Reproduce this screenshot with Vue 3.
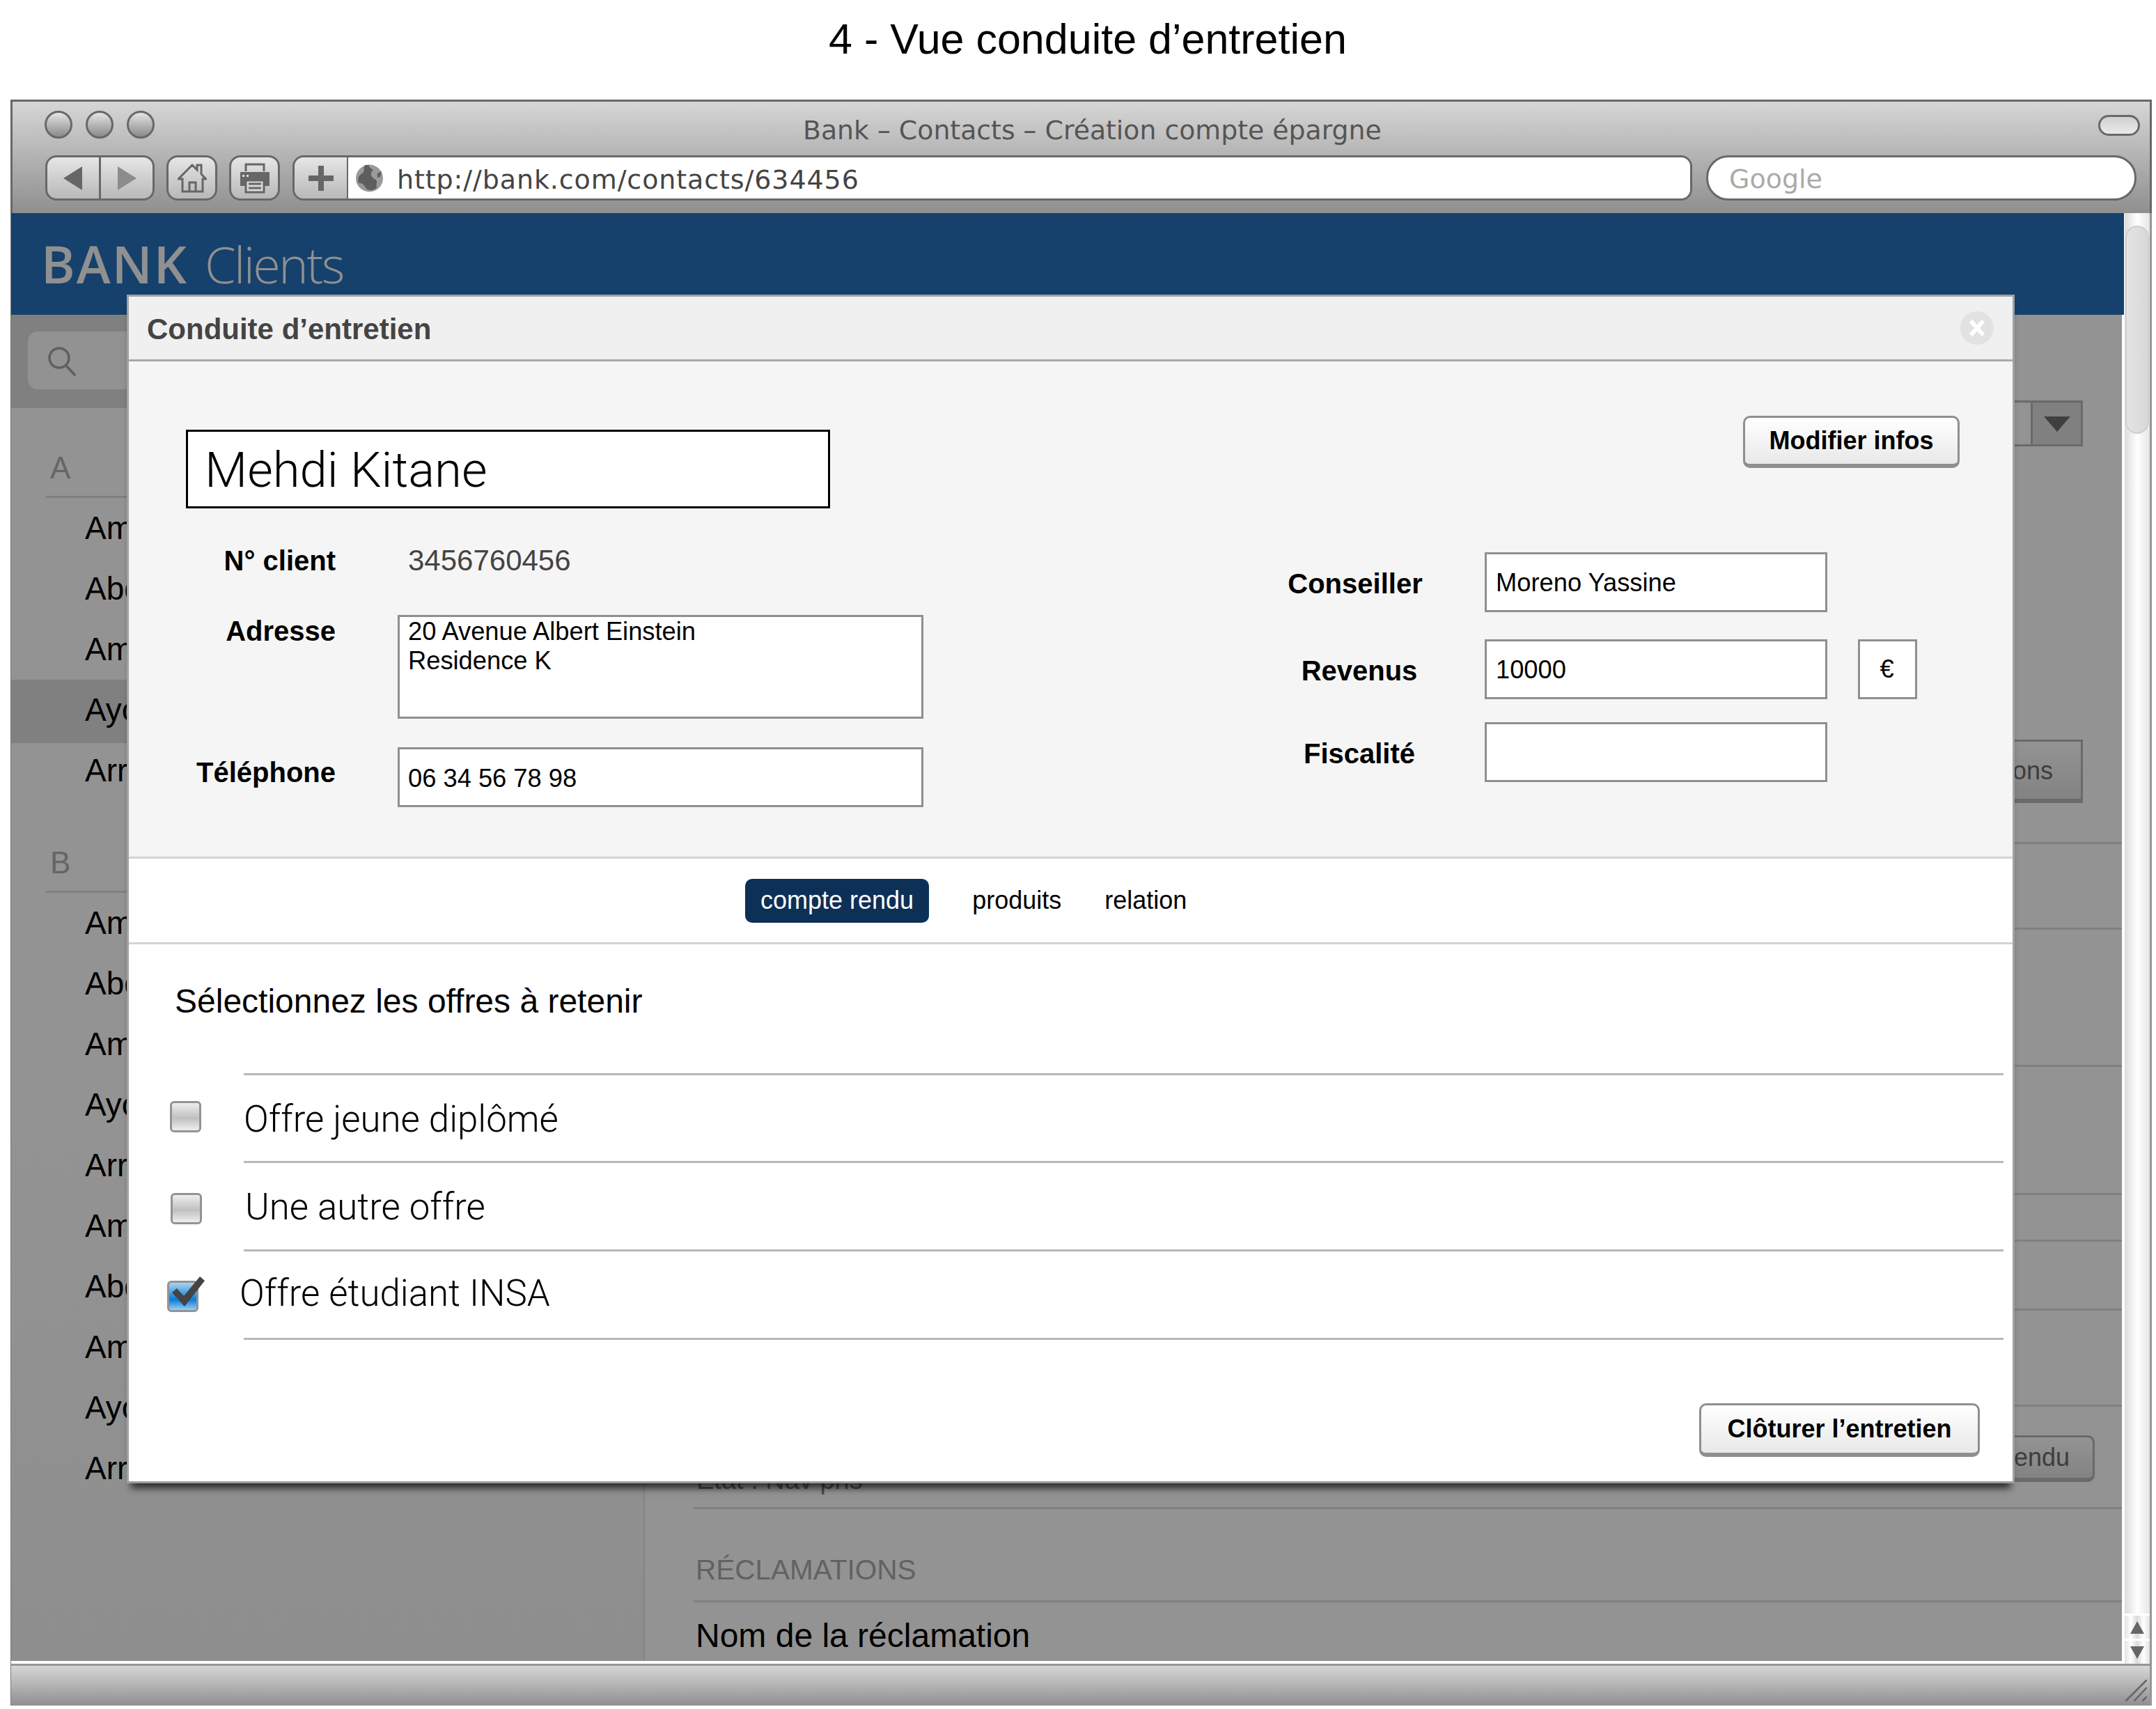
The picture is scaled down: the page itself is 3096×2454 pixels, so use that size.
<template>
  <div class="page">
    <h1 class="doc-title">4 - Vue conduite d’entretien</h1>

    <div class="window">
      <div class="chrome">
        <div class="titlebar">
          <div class="lights">
            <span class="light"></span>
            <span class="light"></span>
            <span class="light"></span>
          </div>
          <div class="window-title">Bank – Contacts – Création compte épargne</div>
          <span class="pill"></span>
        </div>
        <div class="toolbar">
          <div class="btn-group nav-group">
            <span class="tool-btn cell-w">
              <svg width="30" height="36" viewBox="0 0 30 36"><path d="M28 1V35L1 18Z" fill="#666"/></svg>
            </span>
            <span class="tool-btn cell-w sep">
              <svg width="30" height="36" viewBox="0 0 30 36"><path d="M2 1V35L29 18Z" fill="#8c8c8c"/></svg>
            </span>
          </div>
          <div class="btn-group single">
            <span class="tool-btn">
              <svg width="42" height="42" viewBox="0 0 42 42" fill="none" stroke="#666" stroke-width="3" stroke-linejoin="miter">
                <path d="M1 22L21 2L28 9V2H34V15L41 22H36V40H7V22Z"/>
                <path d="M17 40V27H26V40"/>
              </svg>
            </span>
          </div>
          <div class="btn-group single">
            <span class="tool-btn">
              <svg width="44" height="44" viewBox="0 0 44 44">
                <path d="M9 12V2H35V12" fill="none" stroke="#666" stroke-width="3"/>
                <rect x="1" y="13" width="42" height="20" fill="#666"/>
                <rect x="4" y="17" width="3" height="3" fill="#ddd"/>
                <rect x="10" y="17" width="3" height="3" fill="#ddd"/>
                <rect x="9" y="25" width="26" height="17" fill="#d8d8d8" stroke="#666" stroke-width="3"/>
                <path d="M13 30H31M13 36H31" stroke="#666" stroke-width="3"/>
              </svg>
            </span>
          </div>
          <div class="address">
            <span class="add-btn">
              <svg width="36" height="36" viewBox="0 0 36 36"><path d="M14 0H22V14H36V22H22V36H14V22H0V14H14Z" fill="#666"/></svg>
            </span>
            <span class="url-field">
              <svg class="globe" width="39" height="40" viewBox="0 0 39 40">
                <circle cx="19.500" cy="20" r="19.500" fill="#9a9a9a"/>
                <path d="M13 1C10 6 14 10 9 13C4 16 2 20 4 27C8 26 12 29 15 35C21 39 27 37 30 33C28 27 33 25 27 21C21 18 20 12 25 8C21 6 18 3 19 1Z" fill="#5e5e5e"/>
                <path d="M31 13L37 10L35 18L31 19Z" fill="#5e5e5e"/>
              </svg>
              <span class="url-text">http://bank.com/contacts/634456</span>
            </span>
          </div>
          <div class="search-field">Google</div>
        </div>
      </div>

      <div class="content">
        <div class="viewport">
          <header class="app-header">
            <span class="brand">BANK</span>
            <span class="brand-sub">Clients</span>
          </header>

          <div class="app-body">
            <aside class="sidebar">
              <div class="sidebar-search">
                <div class="search-box">
                  <svg width="42" height="42" viewBox="0 0 42 42" fill="none" stroke="#5f5f5f" stroke-width="3.500" stroke-linecap="round">
                    <circle cx="17" cy="16" r="14"/>
                    <path d="M27 27L39 40"/>
                  </svg>
                </div>
              </div>
              <div v-for="group in groups" :key="group.letter" class="group">
                <div class="group-letter">{{ group.letter }}</div>
                <div
                  v-for="(name, index) in group.names"
                  :key="group.letter + index"
                  class="client"
                  :class="{ selected: group.letter === 'A' && index === 3 }"
                >{{ name }}</div>
              </div>
            </aside>

            <main class="detail">
              <div class="detail-top">
                <div class="dropdown">
                  <span class="dropdown-arrow"></span>
                </div>
                <div class="ghost-btn">Informations</div>
              </div>
              <div
                v-for="(height, index) in ruleGaps"
                :key="index"
                class="detail-rule"
                :style="{ height: height + 'px' }"
              ></div>
              <div class="detail-state">
                <span class="state-text">Etat : Nav pris</span>
                <span class="ghost-btn rounded">Compte rendu</span>
              </div>
              <div class="detail-heading">RÉCLAMATIONS</div>
              <div class="detail-name">Nom de la réclamation</div>
            </main>
          </div>

          <section class="modal">
            <div class="modal-header">
              <span class="modal-title">Conduite d’entretien</span>
              <span class="modal-close">
                <svg width="24" height="26" viewBox="0 0 24 26"><path d="M3 3L21 23M21 3L3 23" stroke="#fff" stroke-width="6"/></svg>
              </span>
            </div>

            <div class="summary">
              <div class="summary-left">
                <div class="name-box">Mehdi Kitane</div>
                <div class="field-row client-row">
                  <span class="label">N° client</span>
                  <span class="client-no">3456760456</span>
                </div>
                <div class="field-row address-row">
                  <span class="label">Adresse</span>
                  <div class="input area">20 Avenue Albert Einstein<br>Residence K</div>
                </div>
                <div class="field-row phone-row">
                  <span class="label">Téléphone</span>
                  <div class="input phone">06 34 56 78 98</div>
                </div>
              </div>

              <div class="summary-right">
                <button class="action-btn edit-btn">Modifier infos</button>
                <div class="side-row first">
                  <span class="label side-label conseiller">Conseiller</span>
                  <div class="input side-input">Moreno Yassine</div>
                </div>
                <div class="side-row second">
                  <span class="label side-label">Revenus</span>
                  <div class="input side-input">10000</div>
                  <div class="input currency">€</div>
                </div>
                <div class="side-row third">
                  <span class="label side-label">Fiscalité</span>
                  <div class="input side-input"></div>
                </div>
              </div>
            </div>

            <nav class="tabs">
              <span class="tab active">compte rendu</span>
              <span class="tab">produits</span>
              <span class="tab">relation</span>
            </nav>

            <div class="offers">
              <h2 class="offers-title">Sélectionnez les offres à retenir</h2>
              <div class="offer-list">
                <div v-for="offer in offers" :key="offer.label" class="offer">
                  <div class="offer-check">
                    <span
                      class="checkbox"
                      :class="{ checked: offer.checked }"
                      :style="{ marginLeft: offer.boxX + 'px', marginTop: offer.boxY + 'px' }"
                    >
                      <svg v-if="offer.checked" class="tick" width="50" height="44" viewBox="0 0 50 44">
                        <path d="M2 23L9 17L19 28L42 0L49 6L20 43Z" fill="#444"/>
                      </svg>
                    </span>
                  </div>
                  <div class="offer-body">
                    <span class="offer-label" :style="{ marginLeft: offer.textX + 'px', marginTop: offer.textY + 'px' }">{{ offer.label }}</span>
                  </div>
                </div>
              </div>
              <div class="modal-actions">
                <button class="action-btn close-btn">Clôturer l’entretien</button>
              </div>
            </div>
          </section>
        </div>

        <div class="scrollbar">
          <div class="scroll-track">
            <span class="scroll-thumb"></span>
          </div>
          <span class="scroll-arrow"><i class="tri up"></i></span>
          <span class="scroll-arrow"><i class="tri down"></i></span>
        </div>
      </div>

      <footer class="statusbar">
        <svg width="32" height="32" viewBox="0 0 32 32" stroke="#666" stroke-width="2.500" stroke-linecap="round">
          <path d="M2 31L31 2M14 31L31 13M26 31L31 26"/>
        </svg>
      </footer>
    </div>
  </div>
</template>

<script setup>
const groups = [
  { letter: 'A', names: ['Amine', 'Abdel', 'Amel', 'Ayoub', 'Arriel'] },
  { letter: 'B', names: ['Amine', 'Abdel', 'Amel', 'Ayoub', 'Arriel', 'Amine', 'Abdel', 'Amel', 'Ayoub', 'Arriel'] },
]

// hauteurs entre les filets du panneau de droite
const ruleGaps = [123, 197, 184, 67, 99, 138]

const offers = [
  { label: 'Offre jeune diplômé', boxX: 59, boxY: -4, textX: 0, textY: 2, checked: false },
  { label: 'Une autre offre', boxX: 60, boxY: 3, textX: 2, textY: 2, checked: false },
  { label: 'Offre étudiant INSA', boxX: 55, boxY: 2, textX: -6, textY: -4, checked: true },
]
</script>

<style>
html, body {
  margin: 0;
  background: #fff;
}
</style>

<style scoped>
.page {
  width: 3096px;
  height: 2454px;
  overflow: hidden;
  font-family: "Liberation Sans", Arial, sans-serif;
  color: #000;
}

.doc-title {
  margin: 0;
  height: 143px;
  padding: 20px 0 0 28px;
  box-sizing: border-box;
  text-align: center;
  font-size: 61px;
  font-weight: 400;
  line-height: 72px;
}

.window {
  width: 3075px;
  margin-left: 15px;
  display: flex;
  flex-direction: column;
}

/* navigateur */
.chrome {
  height: 163px;
  box-sizing: border-box;
  border: 3px solid #686868;
  border-bottom: 0;
  background: linear-gradient(#d6d6d6, #8f8f8f);
}

.titlebar {
  height: 77px;
  display: flex;
  align-items: flex-start;
  position: relative;
}

.lights {
  display: flex;
  gap: 19px;
  padding: 13px 0 0 46px;
}

.light {
  width: 40px;
  height: 40px;
  box-sizing: border-box;
  border-radius: 50%;
  border: 3px solid #686868;
  background: linear-gradient(#e4e4e4, #8a8a8a);
}

.window-title {
  position: absolute;
  left: 1135px;
  top: 17px;
  width: 830px;
  font-family: "DejaVu Sans", sans-serif;
  font-size: 37.800px;
  line-height: 48px;
  white-space: nowrap;
  color: #555;
}

.pill {
  margin: 19px 14px 0 auto;
  width: 60px;
  height: 30px;
  box-sizing: border-box;
  border-radius: 15px;
  border: 3px solid #686868;
  background: linear-gradient(#d0d0d0, #eaeaea);
}

.toolbar {
  display: flex;
  gap: 17px;
  padding-left: 47px;
  height: 65px;
}

.btn-group {
  display: flex;
  height: 65px;
  box-sizing: border-box;
  border: 3px solid #686868;
  border-radius: 16px;
  background: linear-gradient(#e6e6e6, #b8b8b8);
  overflow: hidden;
}

.nav-group {
  width: 157px;
}

.single {
  width: 73px;
}

.tool-btn {
  flex: 1;
  display: flex;
  align-items: center;
  justify-content: center;
}

.sep {
  border-left: 3px solid #686868;
}

.address {
  display: flex;
  width: 2010px;
  height: 65px;
  box-sizing: border-box;
  border: 3px solid #686868;
  border-radius: 16px;
  overflow: hidden;
  margin-left: 1px;
}

.add-btn {
  width: 75px;
  flex: none;
  display: flex;
  align-items: center;
  justify-content: center;
  border-right: 2px solid #686868;
  background: linear-gradient(#e6e6e6, #b8b8b8);
}

.url-field {
  flex: 1;
  display: flex;
  align-items: center;
  background: #fff;
  padding-left: 11px;
}

.globe {
  flex: none;
}

.url-text {
  margin: 4px 0 0 20px;
  font-family: "DejaVu Sans", sans-serif;
  font-size: 38px;
  letter-spacing: 0.900px;
  color: #444;
  white-space: nowrap;
}

.search-field {
  margin-left: 3px;
  width: 618px;
  height: 65px;
  box-sizing: border-box;
  border: 3px solid #686868;
  border-radius: 32px;
  background: #fff;
  padding-left: 30px;
  font-family: "DejaVu Sans", sans-serif;
  font-size: 38px;
  line-height: 62px;
  color: #aaa;
}

.content {
  display: flex;
  height: 2083px;
  background: #fff;
  border-left: 1px solid #777;
  border-right: 3px solid #969696;
}

.viewport {
  position: relative;
  width: 3031px;
  height: 2079px;
  display: flex;
  flex-direction: column;
  background: #939393;
  flex: none;
}

/* application en arrière-plan */
.app-header {
  height: 146px;
  margin-right: -3px;
  padding-left: 43px;
  box-sizing: border-box;
  background: #15416c;
  color: #909090;
  font-family: "Open Sans", sans-serif;
  font-size: 72px;
  line-height: 78px;
  padding-top: 34px;
  white-space: nowrap;
  flex: none;
}

.brand {
  font-size: 74px;
  font-weight: 600;
  letter-spacing: 2px;
  margin-right: 24px;
}

.brand-sub {
  font-weight: 300;
  letter-spacing: -2.600px;
}

.app-body {
  flex: 1;
  display: flex;
  min-height: 0;
}

.sidebar {
  width: 908px;
  flex: none;
  border-right: 2px solid #838383;
  background: linear-gradient(#939393 60%, #8e8e8e);
}

.sidebar-search {
  height: 134px;
  padding: 24px 0 0 24px;
  box-sizing: border-box;
  background: #808080;
}

.search-box {
  width: 600px;
  height: 83px;
  box-sizing: border-box;
  padding: 22px 0 0 28px;
  border-radius: 14px;
  background: #929292;
}

.group {
  padding-top: 58px;
}

.group + .group {
  padding-top: 61px;
}

.group-letter {
  margin-left: 50px;
  height: 68px;
  border-bottom: 3px solid #808080;
  font-size: 44px;
  line-height: 56px;
  padding-left: 6px;
  color: #666;
}

.client {
  height: 87px;
  padding-left: 106px;
  box-sizing: border-box;
  font-size: 46px;
  line-height: 87px;
}

.client.selected {
  background: #808080;
  box-shadow: 0 4px 0 #808080;
}

.detail {
  flex: 1;
  padding-left: 70px;
  min-width: 0;
}

.detail-top {
  height: 760px;
  box-sizing: border-box;
  display: flex;
  flex-direction: column;
  align-items: flex-end;
  padding: 123px 56px 0 0;
  border-bottom: 3px solid #808080;
}

.dropdown {
  width: 500px;
  height: 66px;
  box-sizing: border-box;
  border: 3px solid #6a6a6a;
  display: flex;
  justify-content: flex-end;
}

.dropdown-arrow {
  width: 69px;
  background: #808080;
  border-left: 3px solid #6a6a6a;
  position: relative;
}

.dropdown-arrow::after {
  content: "";
  position: absolute;
  left: 16px;
  top: 20px;
  border-left: 19px solid transparent;
  border-right: 19px solid transparent;
  border-top: 22px solid #3f3f3f;
}

.ghost-btn {
  height: 91px;
  box-sizing: border-box;
  margin-top: 421px;
  padding: 0 40px;
  border: 3px solid #6a6a6a;
  border-bottom-width: 6px;
  background: linear-gradient(#939393, #838383);
  color: #3d3d3d;
  font-size: 36px;
  line-height: 84px;
  white-space: nowrap;
}

.detail-rule {
  box-sizing: border-box;
  border-bottom: 3px solid #808080;
}

.detail-state {
  height: 147px;
  box-sizing: border-box;
  border-bottom: 3px solid #808080;
  display: flex;
  justify-content: space-between;
  align-items: flex-start;
  padding: 0 39px 0 4px;
}

.state-text {
  margin-top: 83px;
  font-size: 38px;
  line-height: 44px;
  color: #4c4c4c;
  white-space: nowrap;
}

.ghost-btn.rounded {
  margin-top: 41px;
  height: 67px;
  line-height: 58px;
  border-radius: 10px;
  padding: 0 33px 0 60px;
}

.detail-heading {
  height: 134px;
  box-sizing: border-box;
  padding: 62px 0 0 3px;
  border-bottom: 3px solid #808080;
  font-size: 40.500px;
  line-height: 50px;
  color: #626262;
}

.detail-name {
  padding: 20px 0 0 3px;
  font-size: 48px;
  line-height: 56px;
  white-space: nowrap;
}

/* fenêtre modale */
.modal {
  position: absolute;
  left: 166px;
  top: 117px;
  width: 2711px;
  height: 1707px;
  box-sizing: border-box;
  border: 3px solid #a2a2a2;
  border-bottom-color: #9c9c9c;
  background: #fff;
  display: flex;
  flex-direction: column;
  box-shadow: 0 13px 10px -6px rgba(0, 0, 0, 0.7);
}

.modal-header {
  height: 93px;
  flex: none;
  box-sizing: border-box;
  border-bottom: 3px solid #a8a8a8;
  background: #f0f0f0;
  display: flex;
  align-items: center;
  justify-content: space-between;
  padding: 0 27px 0 26px;
}

.modal-title {
  margin-top: 3px;
  font-size: 42px;
  font-weight: 700;
  color: #444;
}

.modal-close {
  width: 48px;
  height: 48px;
  border-radius: 50%;
  background: #e2e2e2;
  display: flex;
  align-items: center;
  justify-content: center;
}

.summary {
  height: 711px;
  flex: none;
  box-sizing: border-box;
  background: #f5f5f5;
  padding: 98px 76px 0 82px;
  display: flex;
  justify-content: space-between;
}

.summary-left {
  width: 1059px;
}

.name-box {
  width: 925px;
  height: 113px;
  box-sizing: border-box;
  border: 3px solid #000;
  background: #fff;
  padding-left: 24px;
  font-family: Roboto, "Liberation Sans", sans-serif;
  font-weight: 300;
  font-size: 70.700px;
  line-height: 110px;
}

.field-row {
  display: grid;
  grid-template-columns: 215px 755px;
  column-gap: 89px;
}

.label {
  font-size: 40px;
  font-weight: 700;
  text-align: right;
  white-space: nowrap;
  line-height: 50px;
}

.client-row {
  margin-top: 50px;
}

.client-no {
  padding-left: 15px;
  font-size: 42px;
  line-height: 50px;
  color: #444;
}

.address-row {
  margin-top: 53px;
}

.address-row .label {
  margin-top: -2px;
}

.phone-row {
  margin-top: 41px;
}

.phone-row .label {
  padding-top: 11px;
}

.input {
  box-sizing: border-box;
  border: 3px solid #8f8f8f;
  background: #fff;
  font-size: 36.300px;
  padding-left: 12px;
}

.area {
  height: 149px;
  line-height: 42px;
  padding-top: 0;
}

.phone {
  height: 86px;
  line-height: 84px;
}

.summary-right {
  width: 964px;
  margin-top: -20px;
  display: flex;
  flex-direction: column;
  align-items: flex-end;
}

.action-btn {
  box-sizing: border-box;
  border: 3px solid #8f8f8f;
  border-bottom-width: 6px;
  border-radius: 10px;
  background: linear-gradient(#fff, #e8e8e8);
  font-family: inherit;
  font-size: 36px;
  font-weight: 700;
  color: #000;
  padding: 0;
}

.edit-btn {
  width: 311px;
  height: 75px;
}

.side-row {
  display: flex;
  align-items: center;
  width: 100%;
}

.side-row.first {
  margin-top: 121px;
}

.side-row.second {
  margin-top: 39px;
}

.side-row.third {
  margin-top: 33px;
}

.side-label {
  width: 204px;
  margin-right: 78px;
  text-align: center;
  padding-top: 4px;
}

.conseiller {
  transform: translateX(-6px);
}

.side-input {
  width: 492px;
  height: 86px;
  line-height: 81px;
  padding-left: 13px;
}

.currency {
  margin-left: 44px;
  width: 85px;
  height: 86px;
  padding: 0 2px 0 0;
  text-align: center;
  line-height: 80px;
}

.tabs {
  height: 126px;
  flex: none;
  box-sizing: border-box;
  border-top: 3px solid #d4d4d4;
  border-bottom: 3px solid #d4d4d4;
  display: flex;
  align-items: center;
  padding-left: 885px;
  gap: 62px;
}

.tab {
  height: 63px;
  font-size: 36px;
  line-height: 62px;
  white-space: nowrap;
}

.tab.active {
  padding: 0 22px;
  border-radius: 10px;
  background: #0d3057;
  color: #fff;
}

.offers {
  flex: 1;
}

.offers-title {
  margin: 0;
  height: 185px;
  box-sizing: border-box;
  padding: 54px 0 0 66px;
  font-size: 48px;
  font-weight: 400;
  line-height: 56px;
}

.offer-list {
  margin-right: 13px;
}

.offer {
  display: flex;
  height: 127px;
}

.offer:first-child {
  height: 129px;
}

.offer-check {
  width: 165px;
  flex: none;
  display: flex;
  align-items: center;
}

.offer-body {
  flex: 1;
  box-sizing: border-box;
  border-bottom: 3px solid #b8b8b8;
  display: flex;
  align-items: center;
}

.offer:first-child .offer-body {
  border-top: 3px solid #b8b8b8;
}

.offer-label {
  font-family: Roboto, "Liberation Sans", sans-serif;
  font-weight: 300;
  font-size: 52.800px;
  line-height: 60px;
  white-space: nowrap;
}

.checkbox {
  position: relative;
  width: 45px;
  height: 45px;
  box-sizing: border-box;
  border: 3px solid #939393;
  border-radius: 6px;
  background: linear-gradient(#eee, #c0c0c0 55%, #eee);
}

.checkbox.checked {
  background: linear-gradient(#a8d4f5, #0a7bd6 62%, #9ad0f6);
}

.tick {
  position: absolute;
  left: 2px;
  top: -9px;
}

.modal-actions {
  display: flex;
  justify-content: flex-end;
  padding: 91px 47px 0 0;
}

.close-btn {
  width: 403px;
  height: 77px;
}

/* barre de défilement */
.scrollbar {
  width: 36px;
  margin-left: 4px;
  display: flex;
  flex-direction: column;
  flex: none;
  gap: 3px;
  height: 2083px;
}

.scroll-track {
  flex: 1;
  padding: 18px 0 0 1px;
  background: linear-gradient(90deg, #dcdcdc, #fff 50%, #e6e6e6);
}

.scroll-thumb {
  display: block;
  width: 34px;
  height: 299px;
  box-sizing: border-box;
  border: 2px solid #cfcfcf;
  border-radius: 17px;
  background: linear-gradient(90deg, #e4e4e4, #d8d8d8);
}

.scroll-arrow {
  height: 33px;
  display: flex;
  align-items: center;
  justify-content: center;
  background: linear-gradient(90deg, #e2e2e2, #fff 25%, #dadada 50%, #fff 75%, #e2e2e2);
}

.tri {
  width: 0;
  height: 0;
  border-left: 10px solid transparent;
  border-right: 10px solid transparent;
}

.tri.up {
  border-bottom: 18px solid #666;
}

.tri.down {
  border-top: 18px solid #666;
}

.statusbar {
  height: 60px;
  box-sizing: border-box;
  border-top: 3px solid #969696;
  border-right: 3px solid #969696;
  border-left: 1px solid #777;
  background: linear-gradient(#d6d6d6, #8f8f8f);
  display: flex;
  justify-content: flex-end;
  align-items: flex-end;
  padding: 0 4px 6px 0;
}
</style>
